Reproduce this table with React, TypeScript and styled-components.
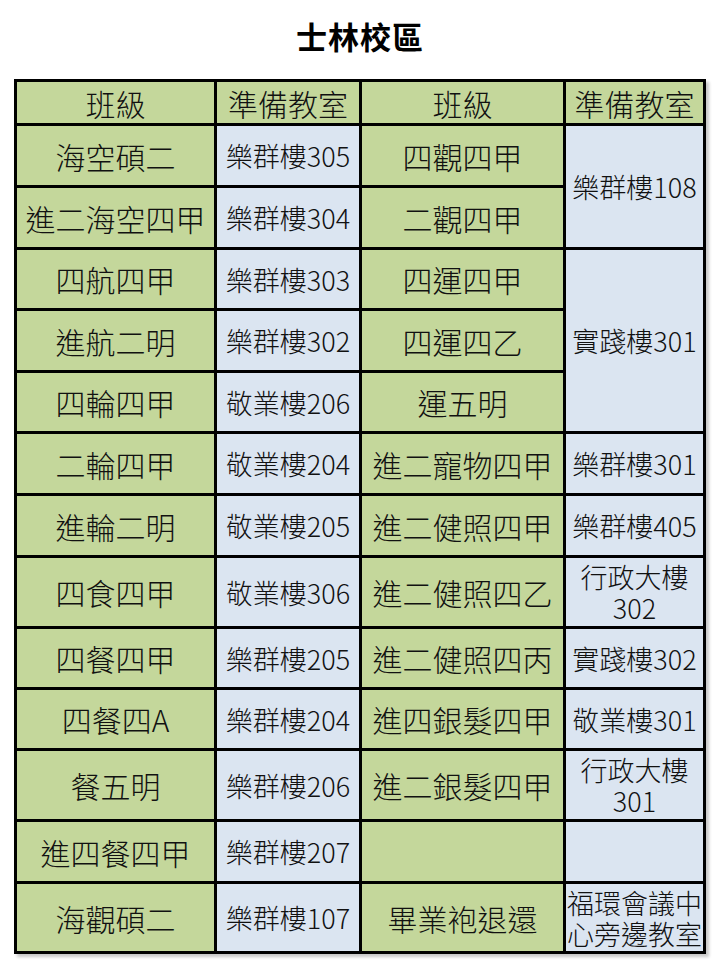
import React from 'react';
import styled, { createGlobalStyle } from 'styled-components';

const GlobalStyle = createGlobalStyle`
  html, body {
    margin: 0;
    padding: 0;
    background: #ffffff;
  }
  body {
    font-family: "Noto Sans CJK TC", "Noto Sans", sans-serif;
    color: #111111;
  }
`;

type Kind = 'head' | 'class' | 'room';

interface Room {
  text: string;
  span?: number;
}

interface Row {
  classA: string;
  roomA: string;
  classB: string;
  roomB: Room | null;
}

const rowHeights = [41, 59, 59, 58, 59, 58, 59, 59, 68, 58, 58, 68, 59, 67];

const rows: Row[] = [
  { classA: '海空碩二', roomA: '樂群樓305', classB: '四觀四甲', roomB: { text: '樂群樓108', span: 2 } },
  { classA: '進二海空四甲', roomA: '樂群樓304', classB: '二觀四甲', roomB: null },
  { classA: '四航四甲', roomA: '樂群樓303', classB: '四運四甲', roomB: { text: '實踐樓301', span: 3 } },
  { classA: '進航二明', roomA: '樂群樓302', classB: '四運四乙', roomB: null },
  { classA: '四輪四甲', roomA: '敬業樓206', classB: '運五明', roomB: null },
  { classA: '二輪四甲', roomA: '敬業樓204', classB: '進二寵物四甲', roomB: { text: '樂群樓301' } },
  { classA: '進輪二明', roomA: '敬業樓205', classB: '進二健照四甲', roomB: { text: '樂群樓405' } },
  { classA: '四食四甲', roomA: '敬業樓306', classB: '進二健照四乙', roomB: { text: '行政大樓\n302' } },
  { classA: '四餐四甲', roomA: '樂群樓205', classB: '進二健照四丙', roomB: { text: '實踐樓302' } },
  { classA: '四餐四A', roomA: '樂群樓204', classB: '進四銀髮四甲', roomB: { text: '敬業樓301' } },
  { classA: '餐五明', roomA: '樂群樓206', classB: '進二銀髮四甲', roomB: { text: '行政大樓\n301' } },
  { classA: '進四餐四甲', roomA: '樂群樓207', classB: '', roomB: { text: '' } },
  { classA: '海觀碩二', roomA: '樂群樓107', classB: '畢業袍退還', roomB: { text: '福環會議中\n心旁邊教室' } },
];

const Page = styled.div`
  width: 720px;
  min-height: 960px;
  display: flex;
  flex-direction: column;
  align-items: center;
`;

const Title = styled.h1`
  margin: 0;
  padding-top: 18px;
  height: 60px;
  box-sizing: border-box;
  line-height: 36px;
  font-size: 31px;
  font-weight: 700;
  color: #000;
  letter-spacing: 1px;
`;

const Schedule = styled.div`
  display: grid;
  grid-template-columns: 197px 142px 201px 137px;
  grid-template-rows: ${rowHeights.map((h) => `${h}px`).join(' ')};
  gap: 3px;
  padding: 3px;
  margin-top: 19px;
  background: #000;
  box-shadow: 3px 3px 3px rgba(0, 0, 0, 0.22);
`;

const Cell = styled.div<{ $kind: Kind; $span?: number }>`
  grid-row: span ${(p) => p.$span ?? 1};
  display: flex;
  align-items: center;
  justify-content: center;
  text-align: center;
  white-space: pre-line;
  background: ${(p) => (p.$kind === 'room' ? '#dbe5f1' : '#c4d79b')};
  font-size: ${(p) => (p.$kind === 'room' ? '27px' : '30px')};
  font-weight: 300;
  line-height: ${(p) => (p.$kind === 'room' ? '31px' : '36px')};
  color: #111;
  overflow: hidden;
`;

const headers = ['班級', '準備教室', '班級', '準備教室'];

export default function App() {
  return (
    <Page>
      <GlobalStyle />
      <Title>士林校區</Title>
      <Schedule>
        {headers.map((h, i) => (
          <Cell key={`h${i}`} $kind="head">
            {h}
          </Cell>
        ))}
        {rows.map((row, i) => (
          <React.Fragment key={i}>
            <Cell $kind="class">{row.classA}</Cell>
            <Cell $kind="room">{row.roomA}</Cell>
            <Cell $kind="class">{row.classB}</Cell>
            {row.roomB && (
              <Cell $kind="room" $span={row.roomB.span}>
                {row.roomB.text}
              </Cell>
            )}
          </React.Fragment>
        ))}
      </Schedule>
    </Page>
  );
}
